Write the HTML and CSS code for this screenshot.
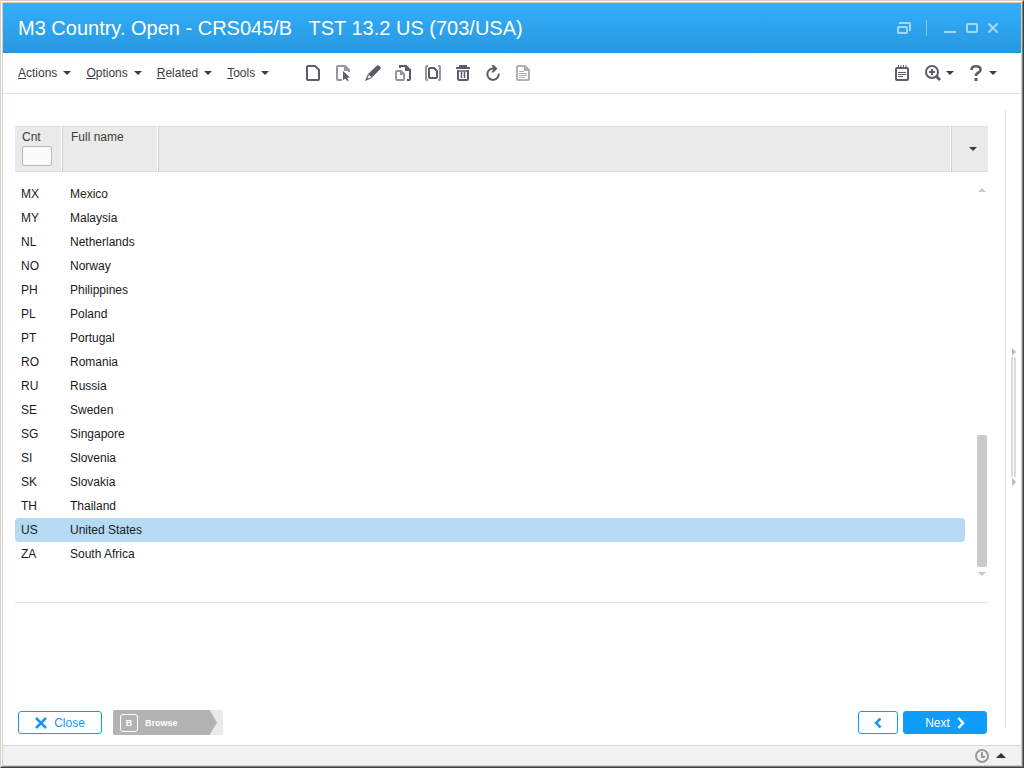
FILE: index.html
```
<!DOCTYPE html>
<html lang="en">
<head>
    <meta charset="utf-8">
    <title>M3 Country. Open - CRS045/B</title>
    <link rel="stylesheet" href="styles.css">
</head>
<body>
    <div class="frame">
        <div class="frame-mid">
            <div class="window">
                <header class="titlebar">
                    <h1>M3 Country. Open - CRS045/B   TST 13.2 US (703/USA)</h1>
                    <div class="window-controls">
                        <button type="button" class="detach" aria-label="Detach">
                            <svg width="14" height="12" viewBox="0 0 14 12"><path d="M3 2V1h9q1 0 1 1v6h-1"/><rect x="1" y="5" width="9" height="6" rx="1"/></svg>
                        </button>
                        <span class="divider"></span>
                        <button type="button" aria-label="Minimize">
                            <svg width="12" height="12" viewBox="0 0 12 12"><path d="M0 10h12"/></svg>
                        </button>
                        <button type="button" aria-label="Maximize">
                            <svg width="12" height="10" viewBox="0 0 12 10"><rect x="1" y="1" width="10" height="8" rx="1"/></svg>
                        </button>
                        <button type="button" aria-label="Close window">
                            <svg width="10" height="10" viewBox="0 0 10 10"><path d="M0.5 0.5l9 9M9.5 0.5l-9 9"/></svg>
                        </button>
                    </div>
                </header>

                <div class="toolbar">
                    <nav class="menus">
                        <button type="button"><span><u>A</u>ctions</span><i class="caret"></i></button>
                        <button type="button"><span><u>O</u>ptions</span><i class="caret"></i></button>
                        <button type="button"><span><u>R</u>elated</span><i class="caret"></i></button>
                        <button type="button"><span><u>T</u>ools</span><i class="caret"></i></button>
                    </nav>
                    <div class="tools">
                        <button type="button" aria-label="New">
                            <svg width="16" height="16" viewBox="0 0 16 16"><path d="M3 1h7l4 4v9q0 1-1 1H3q-1 0-1-1V2q0-1 1-1z"/></svg>
                        </button>
                        <button type="button" aria-label="Select">
                            <svg width="16" height="16" viewBox="0 0 16 16"><path class="light" d="M7 15H3q-1 0-1-1V2q0-1 1-1h7l4 4v2M10 1v4h4"/><path class="solid" d="M8 6l7 6.500-3 .3 1.700 2.700-1.500.5-1.700-2.600L8 15z"/></svg>
                        </button>
                        <button type="button" aria-label="Edit">
                            <svg width="16" height="16" viewBox="0 0 16 16"><path class="solid" d="M12 0.500q1-.8 2 .2l1.400 1.400q1 1 0 2L7 12.500 3 9z"/><path d="M3.500 9.500L1 15l5.500-2.500" stroke-width="1.300"/></svg>
                        </button>
                        <button type="button" aria-label="Copy">
                            <svg width="16" height="16" viewBox="0 0 16 16"><path d="M5 3V1h6l4 4v9q0 1-1 1h-2M11 1v4h4"/><path class="light" d="M2 6h4l3 3v5q0 1-1 1H2q-1 0-1-1V7q0-1 1-1zM6 6v3h3"/></svg>
                        </button>
                        <button type="button" aria-label="Display">
                            <svg width="16" height="16" viewBox="0 0 16 16"><path class="light" d="M3 1H2Q1 1 1 2v12q0 1 1 1h1M13 1h1q1 0 1 1v12q0 1-1 1h-1"/><path d="M5 3h4l3 3v6q0 1-1 1H5q-1 0-1-1V4q0-1 1-1z"/></svg>
                        </button>
                        <button type="button" aria-label="Delete">
                            <svg width="16" height="16" viewBox="0 0 16 16"><path d="M1 3h14M5 2.500V1h6v1.500M3 5v9q0 1 1 1h8q1 0 1-1V5"/><path d="M2 6h12M6.500 7v6M9.500 7v6" stroke-width="1.500"/></svg>
                        </button>
                        <button type="button" aria-label="Refresh">
                            <svg width="16" height="16" viewBox="0 0 16 16"><path d="M9 3.500H7.500A5.700 5.700 0 1 0 13.700 8.500"/><path class="solid" d="M6.500 0h2l4 3.500-4 4h-2L8.500 3.500z"/></svg>
                        </button>
                        <button type="button" aria-label="Notes" disabled>
                            <svg width="16" height="16" viewBox="0 0 16 16"><path d="M3 1h7l4 4v9q0 1-1 1H3q-1 0-1-1V2q0-1 1-1zM10 1v4h4"/><path d="M4 6.500h5M4 8.500h8M4 10.500h8M4 12.500h6" stroke-width="1"/></svg>
                        </button>
                    </div>
                    <div class="tools-right">
                        <button type="button" aria-label="Notepad">
                            <svg width="14" height="16" viewBox="0 0 14 16"><rect x="1" y="3" width="12" height="12" rx="1"/><path d="M3.500 0v3M6 0v3M8.500 0v3M11 0v3M3 7.500h8M3 9.500h8M3 11.500h5" stroke-width="1"/></svg>
                        </button>
                        <button type="button" aria-label="Zoom">
                            <svg width="16" height="16" viewBox="0 0 16 16"><circle cx="7" cy="7" r="6"/><path d="M4 7h6M7 4v6"/><path d="M11 11l4 4" stroke-width="3"/></svg>
                            <i class="caret"></i>
                        </button>
                        <button type="button" aria-label="Help">
                            <svg width="12" height="16" viewBox="0 0 12 16"><path d="M1.500 5q0-3.700 4.500-3.700t4.500 3.200q0 1.800-2 3Q6 8.700 6 11" stroke-width="2.600"/><path d="M6 13v3" stroke-width="3"/></svg>
                            <i class="caret"></i>
                        </button>
                    </div>
                </div>

                <div class="content">
                    <main>
                        <table class="list">
                            <colgroup>
                                <col class="col-code">
                                <col class="col-name">
                                <col>
                                <col class="col-gap">
                                <col class="col-scroll">
                            </colgroup>
                            <thead>
                                <tr>
                                    <th><label for="cnt">Cnt</label><input type="text" id="cnt"></th>
                                    <th>Full name</th>
                                    <th></th>
                                    <th colspan="2" class="view"><button type="button" aria-label="View"><i class="caret"></i></button></th>
                                </tr>
                            </thead>
                            <tbody>
                                <tr>
                                    <td>MX</td><td>Mexico</td><td></td><td></td>
                                    <td rowspan="16" class="scroll">
                                        <div class="scrollbar"><i class="up"></i><span class="thumb"></span><i class="down"></i></div>
                                    </td>
                                </tr>
                                <tr><td>MY</td><td>Malaysia</td><td></td><td></td></tr>
                                <tr><td>NL</td><td>Netherlands</td><td></td><td></td></tr>
                                <tr><td>NO</td><td>Norway</td><td></td><td></td></tr>
                                <tr><td>PH</td><td>Philippines</td><td></td><td></td></tr>
                                <tr><td>PL</td><td>Poland</td><td></td><td></td></tr>
                                <tr><td>PT</td><td>Portugal</td><td></td><td></td></tr>
                                <tr><td>RO</td><td>Romania</td><td></td><td></td></tr>
                                <tr><td>RU</td><td>Russia</td><td></td><td></td></tr>
                                <tr><td>SE</td><td>Sweden</td><td></td><td></td></tr>
                                <tr><td>SG</td><td>Singapore</td><td></td><td></td></tr>
                                <tr><td>SI</td><td>Slovenia</td><td></td><td></td></tr>
                                <tr><td>SK</td><td>Slovakia</td><td></td><td></td></tr>
                                <tr><td>TH</td><td>Thailand</td><td></td><td></td></tr>
                                <tr class="selected"><td>US</td><td>United States</td><td></td><td></td></tr>
                                <tr><td>ZA</td><td>South Africa</td><td></td><td></td></tr>
                            </tbody>
                        </table>

                        <div class="actions">
                            <button type="button" class="btn wide">
                                <svg width="12" height="12" viewBox="0 0 12 12"><path d="M1 1l10 10M11 1L1 11"/></svg>
                                Close
                            </button>
                            <div class="path"><div class="step"><span>B</span>Browse</div></div>
                            <button type="button" class="btn prev" aria-label="Previous">
                                <svg width="8" height="10" viewBox="0 0 8 10"><path d="M6.500 0.500L2 5l4.500 4.500"/></svg>
                            </button>
                            <button type="button" class="btn wide primary">
                                Next
                                <svg width="8" height="12" viewBox="0 0 8 12"><path d="M1.500 1L6 6l-4.500 5"/></svg>
                            </button>
                        </div>
                    </main>
                    <aside class="side">
                        <i></i>
                        <span class="grip"></span>
                        <i></i>
                    </aside>
                </div>

                <footer class="status">
                    <svg width="14" height="14" viewBox="0 0 14 14"><circle cx="7" cy="7" r="6"/><path d="M7 3v5h3"/></svg>
                    <i class="caret-up"></i>
                </footer>
            </div>
        </div>
    </div>
</body>
</html>
```
FILE: styles.css
```
* {
    box-sizing: border-box;
}

body {
    margin: 0;
    font-family: Arial, "Liberation Sans", sans-serif;
    font-size: 12px;
    color: #1a1a1a;
}

button {
    margin: 0;
    padding: 0;
    border: none;
    background: none;
    font: inherit;
    color: inherit;
    display: flex;
    align-items: center;
    justify-content: center;
    cursor: pointer;
}

svg {
    fill: none;
    stroke: currentColor;
    stroke-width: 2;
}

/* window border, three lines deep */
.frame {
    min-height: 100vh;
    display: flex;
    border: 1px solid;
    border-color: #d4d0c8 #404040 #404040 #d4d0c8;
}

.frame-mid {
    flex: 1;
    display: flex;
    border: 1px solid;
    border-color: #fff #808080 #808080 #fff;
}

.window {
    flex: 1;
    display: flex;
    flex-direction: column;
    border: 1px solid #d4d0c8;
    background: #fff;
}

.titlebar {
    height: 50px;
    padding: 0 23px 0 15px;
    display: flex;
    align-items: center;
    justify-content: space-between;
    background: linear-gradient(#34aefb, #2798df);
    color: #fff;
}

.titlebar h1 {
    margin: 0;
    font-size: 20px;
    font-weight: normal;
    white-space: pre;
}

.window-controls {
    display: flex;
    align-items: center;
    gap: 10px;
    color: #a4d8fb;
}

.detach {
    margin-right: 5px;
}

.divider {
    width: 1px;
    height: 16px;
    margin-right: 7px;
    background: #85c8f4;
}

/* toolbar */
.toolbar {
    height: 41px;
    padding: 0 24px 0 15px;
    display: flex;
    align-items: center;
    border-bottom: 1px solid #e2e2e2;
    color: #3c3c3c;
}

.menus {
    display: flex;
    gap: 15px;
}

.menus button {
    gap: 6px;
}

.caret {
    border: 4px solid transparent;
    border-top-color: #3c3c3c;
    border-bottom: none;
}

.tools {
    display: flex;
    margin-left: 29px;
    color: #5c5e66;
}

.tools button {
    width: 30px;
    height: 30px;
}

.tools button:disabled {
    color: #b0b0b0;
}

.light {
    stroke: #96979c;
}

.solid {
    fill: currentColor;
    stroke: none;
}

.tools-right {
    margin-left: auto;
    display: flex;
    gap: 16px;
    color: #5c5e66;
}

.tools-right button {
    gap: 5px;
}

.tools-right button:last-child {
    gap: 7px;
}

/* content */
.content {
    flex: 1;
    display: flex;
}

main {
    flex: 1;
    padding: 32px 17px 10px 12px;
    display: flex;
    flex-direction: column;
}

.list {
    width: 100%;
    table-layout: fixed;
    border-spacing: 0;
    padding-bottom: 36px;
    border-bottom: 1px solid #e2e2e2;
}

.col-code {
    width: 47px;
}

.col-name {
    width: 96px;
}

.col-gap {
    width: 14px;
}

.col-scroll {
    width: 23px;
}

.list th {
    height: 46px;
    padding: 3px 0 0 8px;
    background: #eaeaea;
    border: 1px solid #dedede;
    border-left-color: #cfcfcf;
    border-right-color: #fff;
    font-weight: normal;
    text-align: left;
    vertical-align: top;
    color: #3c3c3c;
}

.list th:first-child {
    padding-left: 7px;
    border-left: none;
}

.list th:last-child {
    border-right: none;
}

.list th label {
    display: block;
}

.list th input {
    display: block;
    width: 30px;
    height: 20px;
    margin-top: 2px;
    padding: 0 4px;
    border: 1px solid #b8b8b8;
    border-radius: 2px;
    background: #fafafa;
    font: inherit;
}

.list th.view {
    padding: 0 0 0 6px;
    vertical-align: middle;
}

.view button {
    width: 100%;
    height: 30px;
}

.list tbody::before {
    content: "";
    display: block;
    height: 10px;
}

.list td {
    height: 24px;
    padding: 0 0 0 8px;
}

.list td:first-child {
    padding-left: 6px;
}

.selected td {
    background: #b4daf4;
}

.selected td:first-child {
    border-radius: 4px 0 0 4px;
}

.selected td:last-child {
    border-radius: 0 4px 4px 0;
}

.list td.scroll {
    padding: 0 1px 0 12px;
    vertical-align: top;
}

/* runs a little past the last row */
.scrollbar {
    height: 388px;
    margin: 6px 0 -12px;
    display: flex;
    flex-direction: column;
    align-items: center;
}

.up,
.down {
    border: 4px solid transparent;
}

.up {
    border-top: none;
    border-bottom-color: #c8c8c8;
}

.down {
    margin-top: 5px;
    border-bottom: none;
    border-top-color: #c8c8c8;
}

.thumb {
    width: 10px;
    height: 132px;
    margin-top: auto;
    border-radius: 2px;
    background: #cacaca;
}

/* bottom buttons */
.actions {
    margin-top: auto;
    padding: 0 1px 0 3px;
    display: flex;
    align-items: center;
}

.btn {
    height: 23px;
    border: 1px solid #109cfa;
    border-radius: 3px;
    background: #fff;
    color: #1a96ee;
    gap: 7px;
}

.btn svg {
    stroke-width: 2.5;
}

.wide {
    width: 84px;
}

.prev {
    width: 40px;
    margin-left: auto;
    margin-right: 5px;
}

.primary {
    background: #109cfa;
    color: #fff;
}

.path {
    width: 110px;
    height: 25px;
    margin-left: 11px;
    padding-right: 6px;
    border-radius: 2px;
    background: #eaeaea;
}

.step {
    height: 25px;
    padding-left: 7px;
    display: flex;
    align-items: center;
    gap: 7px;
    border-radius: 2px;
    background: #b3b3b3;
    clip-path: polygon(0 0, 93% 0, 100% 50%, 93% 100%, 0 100%);
    font-size: 9px;
    font-weight: bold;
    color: #fff;
}

.step span {
    width: 18px;
    height: 18px;
    border: 1px solid #fff;
    border-radius: 3px;
    line-height: 16px;
    text-align: center;
}

/* splitter on the right */
.side {
    width: 16px;
    margin: 16px 0 17px;
    padding-bottom: 4px;
    border-left: 1px solid #e2e2e2;
    display: flex;
    flex-direction: column;
    align-items: center;
    justify-content: center;
    gap: 1px;
}

.side i {
    border: 4px solid transparent;
    border-left-color: #bcbcbc;
    border-right: none;
}

.grip {
    width: 5px;
    height: 120px;
    border: 2px solid #dcdcdc;
    border-width: 0 2px;
}

.status {
    height: 20px;
    padding-right: 15px;
    display: flex;
    align-items: center;
    justify-content: flex-end;
    gap: 7px;
    border-top: 1px solid #d8d8d8;
    background: #f2f2f2;
    color: #999;
}

.caret-up {
    border: 5px solid transparent;
    border-top: none;
    border-bottom-color: #333;
}
```
